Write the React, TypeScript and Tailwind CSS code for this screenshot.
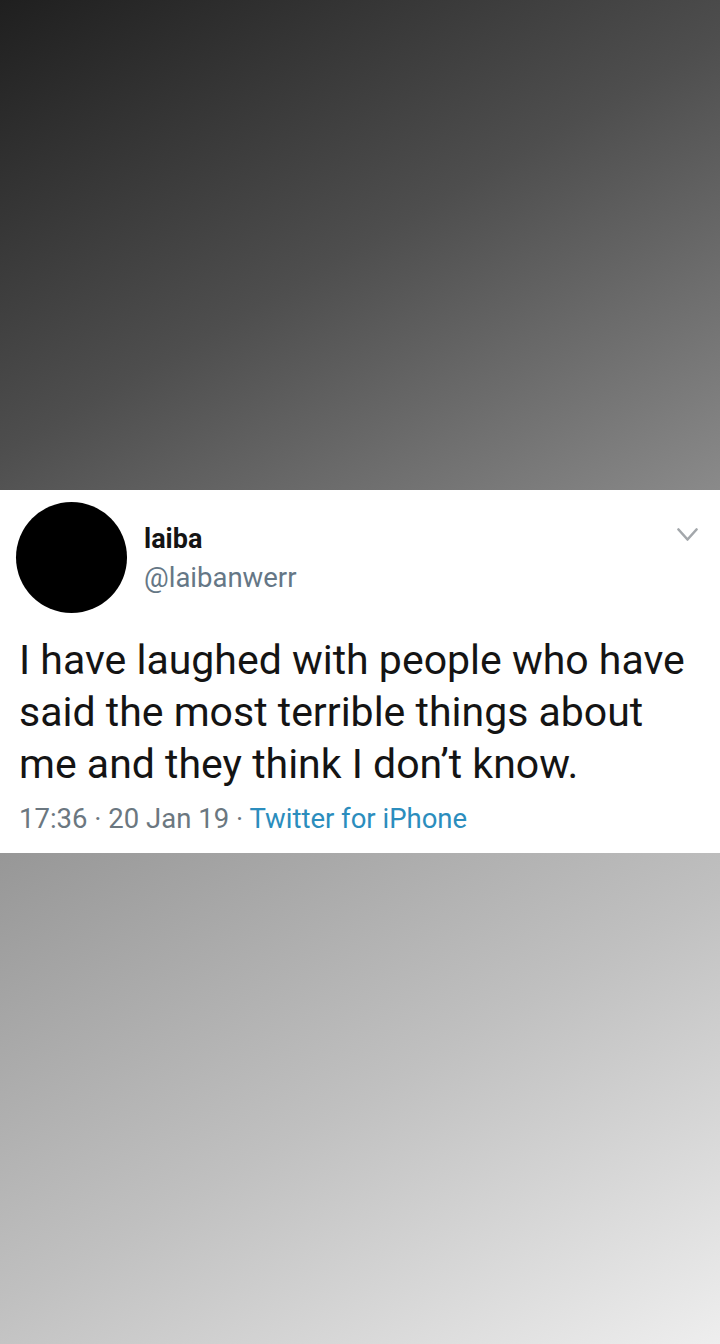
// Screenshot of a single tweet laid over a grey diagonal gradient

function Caret() {
    return (
        <svg width="21" height="14" viewBox="0 0 21 14" fill="none" className="flex-shrink-0 mt-[26px]">
            <polyline points="1.5,1.5 10.5,11.5 19.5,1.5" stroke="#a3a7ab" strokeWidth="2.6" strokeLinecap="round" strokeLinejoin="round" />
        </svg>
    );
}

function TweetCard() {
    return (
        <div className="h-[363px] bg-white pl-4 pr-[22px] pt-3 font-['Roboto','Liberation_Sans',sans-serif]">
            {/* Header */}
            <div className="flex items-start">
                <div className="w-[111px] h-[111px] rounded-full bg-black flex-shrink-0" />
                <div className="ml-[17px] pt-[21px] flex-1">
                    <div className="text-[27px] leading-[32px] font-bold text-[#141414]">laiba</div>
                    <div className="mt-[7px] text-[27.5px] leading-[32px] text-[#657786]">@laibanwerr</div>
                </div>
                <Caret />
            </div>

            {/* Body */}
            <p className="mt-[21px] pl-[3px] text-[41px] leading-[52px] text-[#141414] whitespace-nowrap">
                I have laughed with people who have
                <br />
                said the most terrible things about
                <br />
                me and they think I don’t know.
            </p>

            {/* Meta */}
            <div className="mt-[13px] pl-[3px] text-[27.5px] leading-[32px] text-[#6b7780]">
                17:36 · 20 Jan 19 · <span className="text-[#2b8dbd]">Twitter for iPhone</span>
            </div>
        </div>
    );
}

export default function App() {
    return (
        <div className="flex flex-col min-h-[1344px]">
            <div className="h-[490px] bg-[linear-gradient(150deg,#1f1f1f,#4e4e4e_50%,#8a8a8a)]" />
            <TweetCard />
            <div className="flex-1 bg-[linear-gradient(150deg,#979797,#c0c0c0_50%,#eeeeee)]" />
        </div>
    );
}
